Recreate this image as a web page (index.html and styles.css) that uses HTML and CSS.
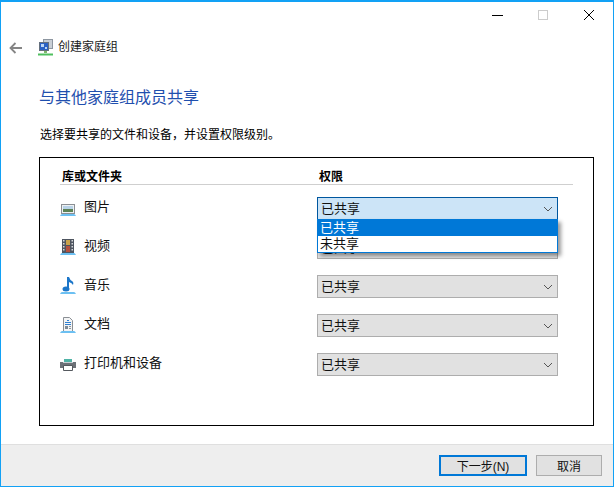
FILE: index.html

```html
<!DOCTYPE html>
<html lang="zh-CN">
<head>
  <meta charset="UTF-8" />
  <title>创建家庭组</title>
  <link rel="stylesheet" href="styles.css">
</head>
<body>

<div class="window">
  <div class="caption">
    <svg class="cap-btn" width="46" height="20" viewBox="0 0 46 20"><path d="M18 15.500h11" stroke="#000" fill="none"/></svg>
    <svg class="cap-btn" width="46" height="20" viewBox="0 0 46 20"><rect x="18.500" y="10.500" width="9" height="9" stroke="#ccc" fill="none"/></svg>
    <svg class="cap-btn" width="46" height="20" viewBox="0 0 46 20"><path d="M18 10l10 10M28 10l-10 10" stroke="#000" fill="none"/></svg>
  </div>

  <div class="nav">
    <svg class="back" width="13" height="12" viewBox="0 0 13 12"><path d="M13 6H2M6.500 1L1.500 6l5 5" stroke="#858585" stroke-width="1.800" fill="none"/></svg>
    <svg class="nav-icon" width="17" height="17" viewBox="0 0 17 17">
      <rect x="6.500" y="0.500" width="9" height="9" fill="#c9cfd6" stroke="#8d96a0"/>
      <rect x="2.500" y="3.500" width="9" height="8" fill="#2b62c4" stroke="#65707d"/>
      <path d="M4 5h3v3H4zM8 8h2v2H8z" fill="#bcd6f5"/>
      <path d="M7 12h3v2H7z" fill="#7fb56b"/>
      <path d="M1 15.500h15" stroke="#4fbf5e" stroke-width="2"/>
    </svg>
    <span class="nav-title">创建家庭组</span>
  </div>

  <div class="content">
    <h1 class="heading">与其他家庭组成员共享</h1>
    <p class="intro">选择要共享的文件和设备，并设置权限级别。</p>

    <div class="panel">
      <div class="head-row">
        <span class="col-name">库或文件夹</span>
        <span class="col-perm">权限</span>
      </div>

      <div class="row">
        <div class="lib">
          <svg class="lib-icon" width="16" height="12" viewBox="0 0 16 12">
            <rect x="1.500" y="0.500" width="13" height="9" fill="#eef1f3" stroke="#8b8f94"/>
            <path d="M3 2h10v3H3z" fill="#b9d3e8"/><path d="M3 5h10v3H3z" fill="#5c8255"/>
            <path d="M0 12q1-2 2-2h12q1 0 2 2z" fill="#6cc0f2"/>
          </svg>
          <span>图片</span>
        </div>
        <div class="combo open">
          <span>已共享</span>
          <svg class="chev" width="10" height="6" viewBox="0 0 10 6"><path d="M1 1l4 4 4-4" stroke="#555" fill="none"/></svg>
          <ul class="menu">
            <li class="sel">已共享</li>
            <li>未共享</li>
          </ul>
        </div>
      </div>

      <div class="row">
        <div class="lib">
          <svg class="lib-icon" width="16" height="16" viewBox="0 0 16 16">
            <rect x="2" y="0" width="12" height="14" fill="#4e5560"/>
            <path d="M6 1h4v5H6z" fill="#c9a24a"/><path d="M6 7h4v6H6z" fill="#b4503f"/>
            <path d="M3 1h1.500v1.500H3zM3 4h1.500v1.500H3zM3 7h1.500v1.500H3zM3 10h1.500v1.500H3zM11.500 1H13v1.500h-1.500zM11.500 4H13v1.500h-1.500zM11.500 7H13v1.500h-1.500zM11.500 10H13v1.500h-1.500z" fill="#d5d8dc"/>
            <path d="M0 16q1-2 2-2h12q1 0 2 2z" fill="#6cc0f2"/>
          </svg>
          <span>视频</span>
        </div>
        <div class="combo"><span>已共享</span><svg class="chev" width="10" height="6" viewBox="0 0 10 6"><path d="M1 1l4 4 4-4" stroke="#555" fill="none"/></svg></div>
      </div>

      <div class="row">
        <div class="lib">
          <svg class="lib-icon" width="16" height="17" viewBox="0 0 16 17">
            <path d="M8 0v12" stroke="#1c76c9" stroke-width="2"/>
            <path d="M9 0q1 3 3 4t1 4q-1-2-4-3z" fill="#1c76c9"/>
            <ellipse cx="6" cy="12" rx="3.500" ry="2.500" fill="#1c76c9"/>
            <path d="M0 17q1-2 2-2h12q1 0 2 2z" fill="#6cc0f2"/>
          </svg>
          <span>音乐</span>
        </div>
        <div class="combo"><span>已共享</span><svg class="chev" width="10" height="6" viewBox="0 0 10 6"><path d="M1 1l4 4 4-4" stroke="#555" fill="none"/></svg></div>
      </div>

      <div class="row">
        <div class="lib">
          <svg class="lib-icon" width="16" height="16" viewBox="0 0 16 16">
            <path d="M3.500 0.500h6l3 3v11h-9z" fill="#f3f4f5" stroke="#8b8f94"/>
            <path d="M7 3h2v1H7zM5 5h6v1H5zM5 7h6v1H5z" fill="#2f7fd0"/>
            <path d="M5 9h3v3H5z" fill="#7d8a96"/><path d="M9 9h2v1H9zM9 11h2v1H9z" fill="#8b949c"/>
            <path d="M0 16q1-2 2-2h12q1 0 2 2z" fill="#6cc0f2"/>
          </svg>
          <span>文档</span>
        </div>
        <div class="combo"><span>已共享</span><svg class="chev" width="10" height="6" viewBox="0 0 10 6"><path d="M1 1l4 4 4-4" stroke="#555" fill="none"/></svg></div>
      </div>

      <div class="row">
        <div class="lib">
          <svg class="lib-icon printer" width="16" height="12" viewBox="0 0 16 12">
            <path d="M4 0h8v3H4z" fill="#4fb3a6"/>
            <path d="M0 3h16v6H0z" fill="#6d7278"/>
            <path d="M3 3h10v1H3z" fill="#c9ced3"/>
            <path d="M3.500 6.500h9v5h-9z" fill="#fff" stroke="#55595e"/>
          </svg>
          <span>打印机和设备</span>
        </div>
        <div class="combo"><span>已共享</span><svg class="chev" width="10" height="6" viewBox="0 0 10 6"><path d="M1 1l4 4 4-4" stroke="#555" fill="none"/></svg></div>
      </div>
    </div>
  </div>

  <div class="footer">
    <button class="btn primary">下一步(N)</button>
    <button class="btn">取消</button>
  </div>
</div>

</body>
</html>
```

FILE: styles.css

```css
* { box-sizing: border-box; margin: 0; padding: 0; }

html, body {
  width: 616px;
  height: 488px;
  background: #fff;
  overflow: hidden;
}

body {
  font-family: "Liberation Sans", "Noto Sans CJK SC", sans-serif;
  font-size: 12px;
  color: #000;
}

.window {
  width: 614px;
  height: 487px;
  border: 1px solid #12a1f5;
  border-top-width: 2px;
  display: flex;
  flex-direction: column;
}

.caption {
  height: 20px;
  display: flex;
  justify-content: flex-end;
  padding-right: 1px;
}

.cap-btn { display: block; margin-top: -2px; }

.nav {
  height: 17px;
  margin-top: 17px;
  display: flex;
  align-items: center;
  padding-left: 8px;
}

.back { margin-right: 15px; }
.nav-icon { margin-right: 4px; }
.nav-title { color: #1a1a1a; line-height: 17px; }

.content {
  flex: 1;
  padding: 0 20px 0 38px;
  display: flex;
  flex-direction: column;
}

.heading {
  font-size: 16px;
  font-weight: normal;
  color: #1f4fae;
  line-height: 22px;
  margin-top: 31px;
}

.intro {
  line-height: 18px;
  margin-top: 17px;
  margin-left: 1px;
}

.panel {
  width: 555px;
  height: 269px;
  margin-top: 13px;
  border: 1px solid #000;
  padding: 11px 20px 0 20px;
}

.head-row {
  width: 513px;
  height: 16px;
  border-bottom: 1px solid #cfcfcf;
  display: flex;
  font-weight: bold;
  line-height: 16px;
  padding-left: 2px;
}

.col-name { width: 257px; }

.row {
  width: 498px;
  height: 23px;
  margin-top: 16px;
  display: flex;
  justify-content: space-between;
}

.head-row + .row { margin-top: 12px; }

.lib {
  width: 257px;
  display: flex;
  font-size: 13px;
  line-height: 20px;
  color: #111;
  position: relative;
  padding-left: 24px;
}

.lib-icon {
  position: absolute;
  left: 0;
  bottom: 4px;
}

.lib-icon.printer { bottom: 5px; }

.combo {
  width: 241px;
  height: 23px;
  border: 1px solid #adadad;
  background: #e1e1e1;
  font-size: 13px;
  line-height: 21px;
  padding-left: 3px;
  position: relative;
  display: flex;
  align-items: center;
  justify-content: space-between;
  color: #111;
}

.chev { margin-right: 4px; margin-top: 1px; }

.combo.open {
  border-color: #00579f;
  background: #cce4f7;
  z-index: 2;
}

.menu {
  position: absolute;
  left: -1px;
  top: 21px;
  width: 241px;
  list-style: none;
  background: #fff;
  border: 1px solid #0078d7;
  box-shadow: 3px 3px 4px rgba(0, 0, 0, 0.4);
}

.menu li {
  height: 16px;
  line-height: 15px;
  padding-left: 2px;
}

.menu li.sel {
  background: #0078d7;
  color: #fff;
}

.footer {
  height: 42px;
  background: #eee;
  border-top: 1px solid #dfdfdf;
  display: flex;
  justify-content: flex-end;
  align-items: flex-start;
  gap: 9px;
  padding: 10px 11px 0 0;
}

.btn {
  width: 66px;
  height: 21px;
  border: 1px solid #adadad;
  background: #e1e1e1;
  font: inherit;
  color: #111;
}

.btn.primary {
  width: 88px;
  border: 2px solid #0078d7;
}
```
